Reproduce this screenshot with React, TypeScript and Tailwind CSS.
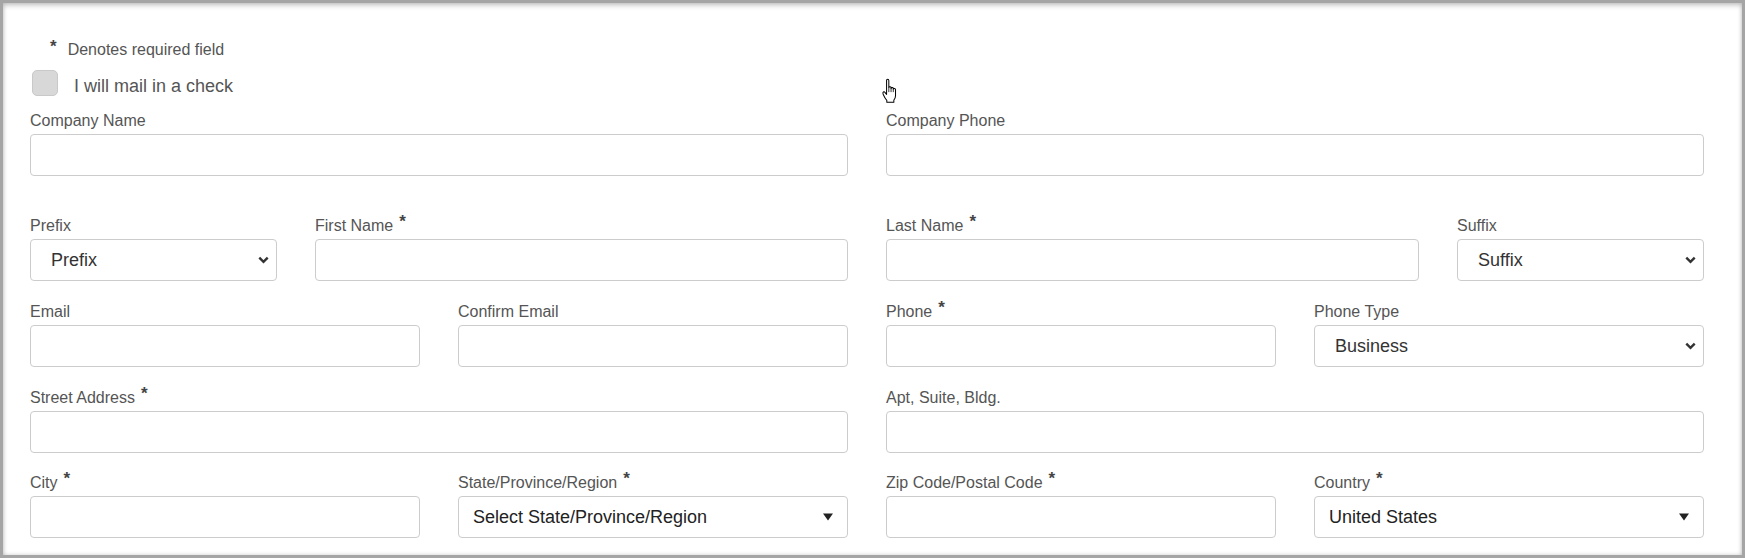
import type { ReactNode } from 'react';

function Star() {
    return <span className="relative -top-[4px] ml-[6px] text-[17px] font-bold text-[#444]">*</span>;
}

function Label({ text, required }: { text: string; required?: boolean }) {
    return (
        <div className="mb-[3px] h-5 whitespace-nowrap text-[16px] leading-5 text-[#555]">
            {text}
            {required && <Star />}
        </div>
    );
}

function TextField({ label, required }: { label: string; required?: boolean }) {
    return (
        <div>
            <Label text={label} required={required} />
            <input
                type="text"
                className="block h-[42px] w-full rounded-[4px] border border-[#cccccc] bg-white px-3 text-[18px] text-[#333] outline-none"
            />
        </div>
    );
}

function Chevron() {
    return (
        <svg className="pointer-events-none absolute right-[8px] top-1/2 -translate-y-1/2" width="11" height="8" viewBox="0 0 11 8">
            <path d="M1.3 1.6 5.5 5.8 9.7 1.6" stroke="#333" strokeWidth="2.4" fill="none" />
        </svg>
    );
}

function Triangle() {
    return (
        <svg className="pointer-events-none absolute right-[15px] top-1/2 -translate-y-1/2" width="10" height="8" viewBox="0 0 10 8">
            <path d="M0 0.5h10L5 7.5z" fill="#222" />
        </svg>
    );
}

function SelectField({
    label,
    required,
    value,
    arrow,
}: {
    label: string;
    required?: boolean;
    value: string;
    arrow: 'chevron' | 'triangle';
}) {
    const icon: ReactNode = arrow === 'chevron' ? <Chevron /> : <Triangle />;
    return (
        <div>
            <Label text={label} required={required} />
            <div className="relative">
                {arrow === 'chevron' ? (
                    <select
                        defaultValue={value}
                        className="block h-[42px] w-full appearance-none rounded-[4px] border border-[#cccccc] bg-white pl-[20px] pr-8 text-[18px] text-[#333] outline-none"
                    >
                        <option>{value}</option>
                    </select>
                ) : (
                    <select
                        defaultValue={value}
                        className="block h-[42px] w-full appearance-none rounded-[4px] border border-[#cccccc] bg-white pl-[14px] pr-8 text-[18px] text-[#222] outline-none"
                    >
                        <option>{value}</option>
                    </select>
                )}
                {icon}
            </div>
        </div>
    );
}

function HandCursor() {
    return (
        <svg className="pointer-events-none absolute left-[878px] top-[75px]" width="19" height="26" viewBox="0 0 17 23">
            <path
                d="M5 10V2.2Q5 1 6 1Q7 1 7 2.2V8.4Q7 7.6 8 7.6Q9 7.6 9 8.4V9.2Q9 8.4 10 8.4Q11 8.4 11 9.2V10Q11 9.3 12 9.3Q13 9.3 13 10.2V15.5Q13 18 11.5 19.6V21.5H5.2V19.8Q3.6 18.2 2 14.6Q1.3 13 2.1 12.4Q3 11.9 3.9 13.2L5 14.5Z"
                fill="#fff"
                stroke="#000"
                strokeWidth="0.9"
                strokeLinejoin="round"
            />
            <path d="M7 8.4V12.5M9 9.2V12.5M11 10V12.5" stroke="#000" strokeWidth="0.7" />
        </svg>
    );
}

export default function App() {
    return (
        <div className="relative box-border h-[558px] w-full overflow-hidden border-[3px] border-[#a5a5a5] bg-white pl-[27px] pr-[38px] pt-[37px] font-['Liberation_Sans',Arial,sans-serif] shadow-[inset_0_3px_5px_rgba(0,0,0,0.16),inset_0_0_4px_rgba(0,0,0,0.18)]">
            <div className="ml-[20px] flex h-5 items-center text-[16px] leading-5 text-[#555]">
                <span className="relative -top-[3px] text-[17px] font-bold text-[#444]">*</span>
                <span className="ml-[11px]">Denotes required field</span>
            </div>

            <div className="mt-[10px] flex items-start">
                <div className="ml-[2px] h-[26px] w-[26px] rounded-[5px] border border-[#c9c9c9] bg-[#d8d8d8]" />
                <span className="ml-[16px] mt-[5px] text-[18px] leading-[22px] text-[#555]">I will mail in a check</span>
            </div>

            <div className="mt-[14px] grid grid-cols-2 gap-x-[38px]">
                <TextField label="Company Name" />
                <TextField label="Company Phone" />
            </div>

            <div className="mt-[40px] grid grid-cols-[247px_1fr_1fr_247px] gap-x-[38px]">
                <SelectField label="Prefix" value="Prefix" arrow="chevron" />
                <TextField label="First Name" required />
                <TextField label="Last Name" required />
                <SelectField label="Suffix" value="Suffix" arrow="chevron" />
            </div>

            <div className="mt-[21px] grid grid-cols-4 gap-x-[38px]">
                <TextField label="Email" />
                <TextField label="Confirm Email" />
                <TextField label="Phone" required />
                <SelectField label="Phone Type" value="Business" arrow="chevron" />
            </div>

            <div className="mt-[21px] grid grid-cols-2 gap-x-[38px]">
                <TextField label="Street Address" required />
                <TextField label="Apt, Suite, Bldg." />
            </div>

            <div className="mt-[20px] grid grid-cols-4 gap-x-[38px]">
                <TextField label="City" required />
                <SelectField label="State/Province/Region" required value="Select State/Province/Region" arrow="triangle" />
                <TextField label="Zip Code/Postal Code" required />
                <SelectField label="Country" required value="United States" arrow="triangle" />
            </div>

            <HandCursor />
        </div>
    );
}
